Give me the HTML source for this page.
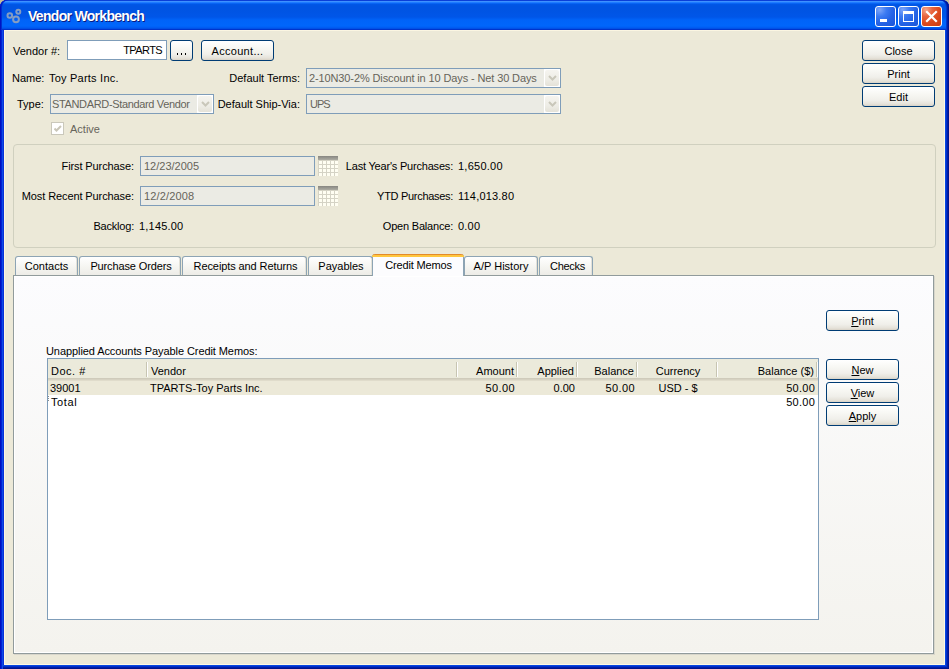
<!DOCTYPE html>
<html><head><meta charset="utf-8">
<style>
*{box-sizing:border-box;margin:0;padding:0}
html,body{width:949px;height:669px;overflow:hidden;background:#C5BC98}
body{position:relative;font:11px "Liberation Sans",sans-serif;color:#000}
.a{position:absolute}
.t{position:absolute;white-space:nowrap;line-height:13px;height:13px}
.r{text-align:right}
.c{text-align:center}
#frame{position:absolute;left:0;top:0;width:949px;height:669px;background:#0831D9;border-radius:7px 7px 0 0;overflow:hidden;
 box-shadow:inset 1px 0 0 #0010C0,inset 2px 0 0 #0022D4,inset 3px 0 0 #0D4AE6,inset -1px -1px 0 #00138C,inset -2px -2px 0 #001EA8,inset -3px -3px 0 #0030CC,inset -4px -4px 0 #0748E0}
#title{position:absolute;left:0;top:0;width:949px;height:30px;border-radius:7px 7px 0 0;
 background:linear-gradient(180deg,#0A3FD8 0px,#0A3FD8 1px,#3D91FF 1px,#3D91FF 2px,#1E7BFF 2px,#1E7BFF 3px,#0864F4 3px,#0864F4 4px,#0057E8 4px,#0054E3 6px,#0054E3 10px,#0056E8 17px,#0063F8 20px,#0066FB 26px,#005CF2 27.5px,#0051E6 28px,#0051E6 29px,#0034CC 29px,#0034CC 30px);
 box-shadow:inset 1px 0 0 #0012C4,inset 2px 0 0 #0030D0,inset -1px 0 0 #00138C,inset -2px 0 0 #0020A8,inset -3px 0 0 #0038D0}
#client{position:absolute;left:4px;top:30px;width:941px;height:635px;background:#ECE9D8;box-shadow:inset 1px 1px 0 #FBF6E2,inset -1px -1px 0 #FFF9E4}
.btn{position:absolute;border:1px solid #003C74;border-radius:3px;
 background:linear-gradient(180deg,#FFFFFF 0%,#F8F8F4 35%,#F0EFEA 70%,#E5E2D9 90%,#D8D2C6 100%);
 text-align:center;line-height:21px;height:21px}
.inp{position:absolute;border:1px solid #7F9DB9;background:#fff;height:20px}
.dis{background:#EBEBE4;color:#66645A}
.combo{position:absolute;border:1px solid #7F9DB9;background:#EBEBE4;height:20px;color:#66645A}
.drop{position:absolute;right:0;top:0;width:16px;height:18px;background:#fff}
.drop i{position:absolute;left:1px;top:1px;width:14px;height:16px;border-radius:2px;background:linear-gradient(180deg,#F5F4EF,#EEEDE6 60%,#E4E2D8)}
.drop svg{position:absolute;left:4px;top:6px}
.tab{position:absolute;top:256px;height:19px;border:1px solid #8DA4B4;border-bottom:none;border-radius:3px 3px 0 0;
 background:linear-gradient(180deg,#FFFFFF,#F6F6F2 50%,#EDECE7);text-align:center;line-height:13px;padding-top:3px;
 box-shadow:inset -1px 0 0 #E3E1D8}
.sep{position:absolute;top:3px;width:2px;height:15px;border-left:1px solid #C7C5B2;border-right:1px solid #fff}
</style></head><body>
<div id="frame">
 <div id="title"></div>
</div>
<div id="client"></div>

<!-- title bar content -->
<svg class="a" style="left:5px;top:8px" width="18" height="18" viewBox="0 0 18 18">
 <g fill="none" stroke="#859DC2" stroke-width="2">
  <circle cx="4.8" cy="7.5" r="2.3"/>
  <circle cx="11" cy="11.3" r="2.9"/>
  <circle cx="13.3" cy="3.8" r="2"/>
 </g>
</svg>
<div class="t" style="left:28px;top:9px;font-weight:bold;font-size:14px;letter-spacing:-0.7px;line-height:15px;height:15px;color:#fff;text-shadow:1px 1px #0A1A80">Vendor Workbench</div>

<!-- top form -->
<div class="t" style="left:13px;top:45px">Vendor #:</div>
<div class="inp" style="left:67px;top:40px;width:100px"></div>
<div class="t r" style="left:70px;top:44px;width:92px;letter-spacing:-0.6px">TPARTS</div>
<div class="btn" style="left:170px;top:40px;width:23px"><i class="a" style="left:6px;top:12px;width:1px;height:2px;background:#000"></i><i class="a" style="left:10px;top:12px;width:1px;height:2px;background:#000"></i><i class="a" style="left:14px;top:12px;width:1px;height:2px;background:#000"></i></div>
<div class="btn" style="left:201px;top:40px;width:73px;letter-spacing:0.3px">Account...</div>

<div class="t" style="left:12px;top:72px">Name:</div>
<div class="t" style="left:49px;top:72px;letter-spacing:0.22px">Toy Parts Inc.</div>
<div class="t r" style="left:200px;top:72px;width:100px">Default Terms:</div>
<div class="combo" style="left:306px;top:68px;width:255px"><div class="t" style="left:2px;top:3px;letter-spacing:-0.12px">2-10N30-2% Discount in 10 Days - Net 30 Days</div><div class="drop"><i></i><svg width="9" height="6" viewBox="0 0 9 6"><path d="M1 1L4.5 4.5L8 1" fill="none" stroke="#C9C7BA" stroke-width="2"/></svg></div></div>

<div class="t" style="left:17px;top:98px">Type:</div>
<div class="combo" style="left:50px;top:94px;width:164px"><div class="t" style="left:1px;top:3px;letter-spacing:-0.35px">STANDARD-Standard Vendor</div><div class="drop"><i></i><svg width="9" height="6" viewBox="0 0 9 6"><path d="M1 1L4.5 4.5L8 1" fill="none" stroke="#C9C7BA" stroke-width="2"/></svg></div></div>
<div class="t r" style="left:200px;top:98px;width:100px">Default Ship-Via:</div>
<div class="combo" style="left:306px;top:94px;width:255px"><div class="t" style="left:3px;top:3px;letter-spacing:-1px">UPS</div><div class="drop"><i></i><svg width="9" height="6" viewBox="0 0 9 6"><path d="M1 1L4.5 4.5L8 1" fill="none" stroke="#C9C7BA" stroke-width="2"/></svg></div></div>

<div class="a" style="left:51px;top:122px;width:13px;height:13px;border:1px solid #CAC8BB;background:#fff">
 <svg class="a" style="left:2px;top:2px" width="8" height="8" viewBox="0 0 8 8"><path d="M0.5 3.5L2.5 5.5L7 1" fill="none" stroke="#C9C6B8" stroke-width="2"/></svg>
</div>
<div class="t" style="left:70px;top:123px;color:#67655B">Active</div>

<div class="btn" style="left:862px;top:40px;width:73px">Close</div>
<div class="btn" style="left:862px;top:63px;width:73px">Print</div>
<div class="btn" style="left:862px;top:86px;width:73px">Edit</div>

<!-- group box -->
<div class="a" style="left:13px;top:144px;width:923px;height:104px;border:1px solid #D0D0BF;border-radius:4px"></div>
<div class="t r" style="left:20px;top:160px;width:114px;letter-spacing:-0.1px">First Purchase:</div>
<div class="inp dis" style="left:140px;top:156px;width:175px"><div class="t" style="left:3px;top:3px">12/23/2005</div></div>
<div class="t r" style="left:20px;top:190px;width:114px;letter-spacing:-0.1px">Most Recent Purchase:</div>
<div class="inp dis" style="left:140px;top:186px;width:175px"><div class="t" style="left:3px;top:3px;letter-spacing:0.15px">12/2/2008</div></div>
<div class="t r" style="left:20px;top:220px;width:114px;letter-spacing:-0.2px">Backlog:</div>
<div class="t" style="left:139px;top:220px;letter-spacing:0.2px">1,145.00</div>
<div class="t r" style="left:300px;top:160px;width:153px;letter-spacing:-0.2px">Last Year's Purchases:</div>
<div class="t" style="left:458px;top:160px;letter-spacing:0.25px">1,650.00</div>
<div class="t r" style="left:300px;top:190px;width:153px;letter-spacing:-0.3px">YTD Purchases:</div>
<div class="t" style="left:458px;top:190px;letter-spacing:0.2px">114,013.80</div>
<div class="t r" style="left:300px;top:220px;width:153px;letter-spacing:-0.2px">Open Balance:</div>
<div class="t" style="left:458px;top:220px;letter-spacing:0.2px">0.00</div>
<svg class="a" style="left:318px;top:156px" width="20" height="20" viewBox="0 0 20 20" id="cal1">
 <defs><linearGradient id="cg" x1="0" y1="0" x2="0" y2="1"><stop offset="0" stop-color="#878680"/><stop offset="1" stop-color="#ADACA2"/></linearGradient>
 <pattern id="cp" x="1" y="5" width="4" height="4" patternUnits="userSpaceOnUse"><rect width="3" height="3" fill="#FFFEF2"/></pattern></defs>
 <rect x="0" y="0" width="20" height="20" fill="#D5D3C5"/>
 <rect x="0" y="0" width="20" height="4" fill="url(#cg)"/>
 <rect x="1" y="5" width="19" height="15" fill="url(#cp)"/>
</svg>
<svg class="a" style="left:318px;top:186px" width="20" height="20" viewBox="0 0 20 20">
 <rect x="0" y="0" width="20" height="20" fill="#D5D3C5"/>
 <rect x="0" y="0" width="20" height="4" fill="url(#cg)"/>
 <rect x="1" y="5" width="19" height="15" fill="url(#cp)"/>
</svg>

<!-- tabs -->
<div class="a" style="left:13px;top:275px;width:921px;height:379px;border:1px solid #919B9C;background:linear-gradient(180deg,#FCFCFE,#F4F3EE);box-shadow:inset 1px 1px 0 #fff,inset -1px -1px 0 #fff,1px 1px 0 #D8D6CB"></div>
<div class="tab" style="left:15px;width:63px">Contacts</div>
<div class="tab" style="left:79px;width:102px;padding-left:2px;letter-spacing:-0.13px">Purchase Orders</div>
<div class="tab" style="left:182px;width:125px;padding-left:2px;letter-spacing:-0.1px">Receipts and Returns</div>
<div class="tab" style="left:308px;width:65px;padding-left:1px">Payables</div>
<div class="tab" style="left:539px;width:54px;padding-left:3px;letter-spacing:-0.3px">Checks</div>
<div class="tab" style="left:464px;width:74px">A/P History</div>
<div class="a" style="left:372px;top:254px;width:92px;height:22px;border-left:1px solid #8DA4B4;border-right:1px solid #8DA4B4;background:#FCFCFE;border-radius:3px 3px 0 0"></div>
<div class="a" style="left:372px;top:254px;width:92px;height:3px;background:linear-gradient(180deg,#E38A2A 0,#E38A2A 1px,#FFC53C 1px,#FFC840 3px);border-radius:3px 3px 0 0"></div>
<div class="t c" style="left:373px;top:259px;width:91px;letter-spacing:-0.15px">Credit Memos</div>

<!-- tab content -->
<div class="btn" style="left:826px;top:310px;width:73px"><u>P</u>rint</div>
<div class="t" style="left:46px;top:345px;letter-spacing:-0.08px">Unapplied Accounts Payable Credit Memos:</div>
<div class="a" style="left:47px;top:358px;width:772px;height:262px;border:1px solid #7F9DB9;background:#fff;overflow:hidden">
 <div class="a" style="left:0;top:0;width:770px;height:22px;background:#EBEADB;border-bottom:3px solid #D6D2C2"></div>
 <div class="a" style="left:0;top:19px;width:770px;height:1px;background:#CFCBBB"></div>
 <div class="a" style="left:0;top:21px;width:770px;height:1px;background:#E0DCCB"></div>
 <div class="t" style="left:3px;top:6px;letter-spacing:0.5px">Doc. #</div>
 <div class="sep" style="left:98px"></div>
 <div class="t" style="left:103px;top:6px">Vendor</div>
 <div class="sep" style="left:408px"></div>
 <div class="t r" style="left:410px;top:6px;width:56px">Amount</div>
 <div class="sep" style="left:468px"></div>
 <div class="t r" style="left:470px;top:6px;width:56px">Applied</div>
 <div class="sep" style="left:528px"></div>
 <div class="t r" style="left:530px;top:6px;width:56px">Balance</div>
 <div class="sep" style="left:588px"></div>
 <div class="t c" style="left:590px;top:6px;width:80px">Currency</div>
 <div class="sep" style="left:668px"></div>
 <div class="t r" style="left:670px;top:6px;width:96px">Balance ($)</div>
 <div class="sep" style="left:768px"></div>
 <div class="a" style="left:0;top:22px;width:770px;height:14px;background:#ECE9D8"></div>
 <div class="t" style="left:2px;top:23px">39001</div>
 <div class="t" style="left:102px;top:23px">TPARTS-Toy Parts Inc.</div>
 <div class="t r" style="left:410px;top:23px;width:57px;letter-spacing:0.4px">50.00</div>
 <div class="t r" style="left:470px;top:23px;width:57px">0.00</div>
 <div class="t r" style="left:530px;top:23px;width:57px;letter-spacing:0.4px">50.00</div>
 <div class="t c" style="left:590px;top:23px;width:80px">USD - $</div>
 <div class="t r" style="left:670px;top:23px;width:97px;letter-spacing:0.25px">50.00</div>
 <div class="a" style="left:0;top:37px;width:1px;height:1px;background:#8C8C8C"></div><div class="a" style="left:0;top:39px;width:1px;height:1px;background:#8C8C8C"></div><div class="a" style="left:0;top:41px;width:1px;height:1px;background:#8C8C8C"></div>
 <div class="t" style="left:3px;top:37px;letter-spacing:0.6px">Total</div>
 <div class="t r" style="left:670px;top:37px;width:97px;letter-spacing:0.25px">50.00</div>
</div>
<div class="btn" style="left:826px;top:359px;width:73px"><u>N</u>ew</div>
<div class="btn" style="left:826px;top:382px;width:73px"><u>V</u>iew</div>
<div class="btn" style="left:826px;top:405px;width:73px"><u>A</u>pply</div>

<!-- title buttons -->
<div class="a" style="left:875px;top:6px;width:21px;height:21px;border:1px solid #fff;border-radius:3px;background:radial-gradient(circle at 20% 15%,#7EA5F8 0,#3C7AF2 30%,#2563E6 60%,#1A55D8 100%)">
 <div class="a" style="left:4px;top:12px;width:7px;height:3px;background:#fff"></div>
</div>
<div class="a" style="left:898px;top:6px;width:21px;height:21px;border:1px solid #fff;border-radius:3px;background:radial-gradient(circle at 20% 15%,#7EA5F8 0,#3C7AF2 30%,#2563E6 60%,#1A55D8 100%)">
 <div class="a" style="left:4px;top:4px;width:11px;height:11px;border:1px solid #fff;border-top-width:3px"></div>
</div>
<div class="a" style="left:921px;top:6px;width:21px;height:21px;border:1px solid #fff;border-radius:3px;background:radial-gradient(circle at 20% 15%,#F4A58A 0,#E8653F 30%,#DC4A1E 60%,#CC3C12 100%)">
 <svg class="a" style="left:3px;top:3px" width="13" height="13" viewBox="0 0 13 13"><path d="M2 2L11 11M11 2L2 11" stroke="#fff" stroke-width="2.2" stroke-linecap="square"/></svg>
</div>
</body></html>
